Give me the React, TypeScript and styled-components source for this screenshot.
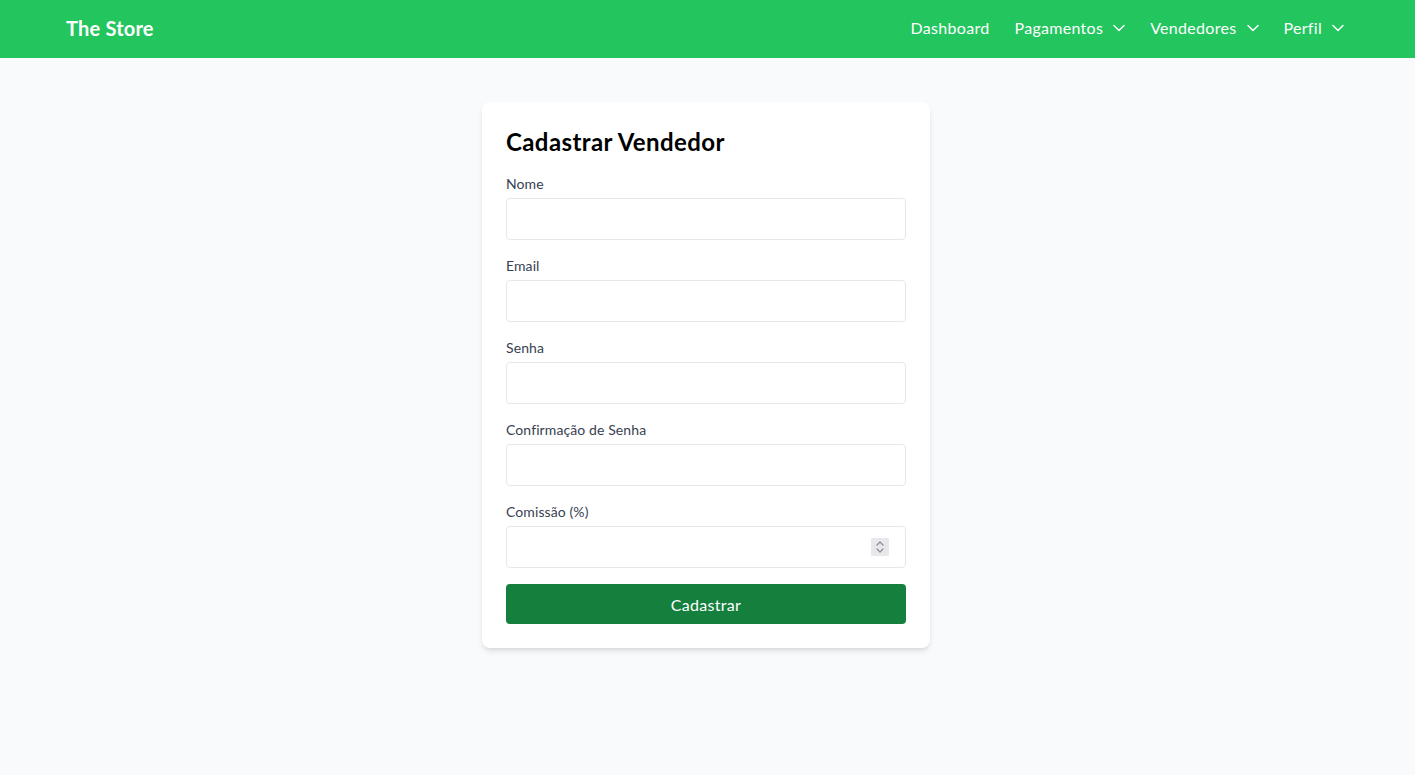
import React from "react";
import styled, { createGlobalStyle } from "styled-components";

const Global = createGlobalStyle`
  * { box-sizing: border-box; }
  body {
    margin: 0;
    background: #f9fafb;
    font-family: Lato, "Noto Sans", sans-serif;
  }
`;

const Page = styled.div`
  min-height: 775px;
  background: #f9fafb;
`;

const NavBar = styled.nav`
  height: 58px;
  background: #22c55e;
  display: flex;
  align-items: center;
  justify-content: space-between;
  padding: 0 71px 3px 66px;
  color: #ffffff;
`;

const Brand = styled.div`
  font-size: 20px;
  font-weight: 700;
  letter-spacing: 0.2px;
`;

const NavLinks = styled.div`
  display: flex;
  align-items: center;
  gap: 25px;
`;

const NavItem = styled.div`
  display: flex;
  align-items: center;
  gap: 10px;
  font-size: 16px;
  letter-spacing: 0.3px;
`;

const Main = styled.main`
  display: flex;
  justify-content: center;
  padding: 44px 3px 0 0;
`;

const Card = styled.div`
  width: 448px;
  background: #ffffff;
  border-radius: 8px;
  padding: 24px;
  box-shadow: 0 4px 6px -1px rgba(0, 0, 0, 0.1), 0 2px 4px -2px rgba(0, 0, 0, 0.1);
`;

const Title = styled.h2`
  margin: 0 0 16px;
  font-size: 24px;
  line-height: 32px;
  font-weight: 700;
  letter-spacing: 0.4px;
  color: #000000;
`;

const Form = styled.form`
  display: flex;
  flex-direction: column;
  gap: 16px;
`;

const Field = styled.div`
  display: flex;
  flex-direction: column;
  gap: 4px;
`;

const Label = styled.label`
  font-size: 14px;
  line-height: 20px;
  letter-spacing: 0.1px;
  color: #374151;
`;

const InputWrap = styled.div`
  position: relative;
`;

const Input = styled.input`
  display: block;
  height: 42px;
  width: 100%;
  border: 1px solid #e5e7eb;
  border-radius: 4px;
  padding: 8px 16px;
  font-size: 16px;
  font-family: inherit;
  background: #fff;
  outline: none;
  -moz-appearance: textfield;

  &::-webkit-inner-spin-button,
  &::-webkit-outer-spin-button {
    -webkit-appearance: none;
    margin: 0;
  }
`;

const Spinner = styled.span`
  position: absolute;
  right: 17px;
  top: 12px;
  width: 18px;
  height: 18px;
  background: #e8e8ec;
  border-radius: 1px;
  display: flex;
  align-items: center;
  justify-content: center;
  color: #8b8b96;
  pointer-events: none;
`;

const Button = styled.button`
  height: 40px;
  width: 100%;
  border: none;
  border-radius: 4px;
  background: #15803d;
  color: #ffffff;
  font-size: 16px;
  letter-spacing: 0.3px;
  font-family: inherit;
  cursor: pointer;
`;

const ChevronIcon = styled.svg`
  width: 12px;
  height: 8px;
  flex-shrink: 0;
`;

const Chevron = () => (
  <ChevronIcon viewBox="0 0 12 8" fill="none" stroke="currentColor" strokeWidth="1.5" strokeLinecap="round" strokeLinejoin="round">
    <path d="M1 1.5 L6 6.5 L11 1.5" />
  </ChevronIcon>
);

const SpinIcon = () => (
  <svg width="10" height="14" viewBox="0 0 10 14" fill="none" stroke="currentColor" strokeWidth="1.2" strokeLinecap="round" strokeLinejoin="round">
    <path d="M2 5 L5 2 L8 5" />
    <path d="M2 9 L5 12 L8 9" />
  </svg>
);

const fields = [
  { label: "Nome", type: "text" },
  { label: "Email", type: "email" },
  { label: "Senha", type: "password" },
  { label: "Confirmação de Senha", type: "password" },
  { label: "Comissão (%)", type: "number" },
];

export default function App() {
  return (
    <Page>
      <Global />
      <NavBar>
        <Brand>The Store</Brand>
        <NavLinks>
          <NavItem>Dashboard</NavItem>
          <NavItem>Pagamentos<Chevron /></NavItem>
          <NavItem>Vendedores<Chevron /></NavItem>
          <NavItem>Perfil<Chevron /></NavItem>
        </NavLinks>
      </NavBar>
      <Main>
        <Card>
          <Title>Cadastrar Vendedor</Title>
          <Form onSubmit={(e) => e.preventDefault()}>
            {fields.map((f) => (
              <Field key={f.label}>
                <Label>{f.label}</Label>
                <InputWrap>
                  <Input type={f.type} />
                  {f.type === "number" && (
                    <Spinner>
                      <SpinIcon />
                    </Spinner>
                  )}
                </InputWrap>
              </Field>
            ))}
            <Button type="submit">Cadastrar</Button>
          </Form>
        </Card>
      </Main>
    </Page>
  );
}
